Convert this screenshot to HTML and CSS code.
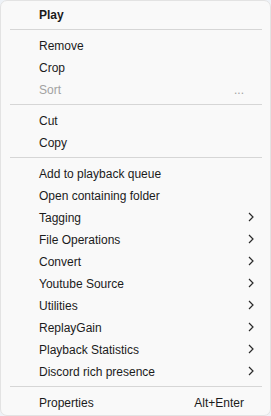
FILE: index.html
```html
<!DOCTYPE html>
<html lang="en">
<head>
  <meta charset="UTF-8" />
  <title>Context menu</title>
  <link rel="stylesheet" href="styles.css">
</head>
<body>

  <!-- Playlist context menu -->
  <div class="menu" role="menu">
    <div class="menu-item default" role="menuitem"><span class="label">Play</span></div>
    <div class="menu-sep"></div>

    <div class="menu-item" role="menuitem"><span class="label">Remove</span></div>
    <div class="menu-item" role="menuitem"><span class="label">Crop</span></div>
    <div class="menu-item disabled" role="menuitem"><span class="label">Sort</span><span class="hint">...</span></div>
    <div class="menu-sep"></div>

    <div class="menu-item" role="menuitem"><span class="label">Cut</span></div>
    <div class="menu-item" role="menuitem"><span class="label">Copy</span></div>
    <div class="menu-sep"></div>

    <div class="menu-item" role="menuitem"><span class="label">Add to playback queue</span></div>
    <div class="menu-item" role="menuitem"><span class="label">Open containing folder</span></div>
    <div class="menu-item sub" role="menuitem"><span class="label">Tagging</span><svg class="chev" viewBox="0 0 6 10"><polyline points="1,1 5,5 1,9" /></svg></div>
    <div class="menu-item sub" role="menuitem"><span class="label">File Operations</span><svg class="chev" viewBox="0 0 6 10"><polyline points="1,1 5,5 1,9" /></svg></div>
    <div class="menu-item sub" role="menuitem"><span class="label">Convert</span><svg class="chev" viewBox="0 0 6 10"><polyline points="1,1 5,5 1,9" /></svg></div>
    <div class="menu-item sub" role="menuitem"><span class="label">Youtube Source</span><svg class="chev" viewBox="0 0 6 10"><polyline points="1,1 5,5 1,9" /></svg></div>
    <div class="menu-item sub" role="menuitem"><span class="label">Utilities</span><svg class="chev" viewBox="0 0 6 10"><polyline points="1,1 5,5 1,9" /></svg></div>
    <div class="menu-item sub" role="menuitem"><span class="label">ReplayGain</span><svg class="chev" viewBox="0 0 6 10"><polyline points="1,1 5,5 1,9" /></svg></div>
    <div class="menu-item sub" role="menuitem"><span class="label">Playback Statistics</span><svg class="chev" viewBox="0 0 6 10"><polyline points="1,1 5,5 1,9" /></svg></div>
    <div class="menu-item sub" role="menuitem"><span class="label">Discord rich presence</span><svg class="chev" viewBox="0 0 6 10"><polyline points="1,1 5,5 1,9" /></svg></div>
    <div class="menu-sep"></div>

    <div class="menu-item" role="menuitem"><span class="label">Properties</span><span class="hint">Alt+Enter</span></div>
  </div>

</body>
</html>
```

FILE: styles.css
```css
html, body {
  margin: 0;
  padding: 0;
}

body {
  background-color: #eef2f7;
  font-family: 'Liberation Sans', Arial, sans-serif;
  font-size: 12px;
  color: #1b1b1b;
}

.menu {
  box-sizing: border-box;
  width: 271px;
  height: 416px;
  background-color: #f9f9f9;
  border: 1px solid #e3e3e3;
  border-radius: 7px;
  padding: 2px 0;
  display: flex;
  flex-direction: column;
}

.menu-item {
  box-sizing: border-box;
  height: 22px;
  display: flex;
  align-items: center;
  padding: 1px 16px 0 38px;
  white-space: nowrap;
}

.menu-item .label {
  flex: 1;
}

.menu-item.default .label {
  font-weight: bold;
}

.menu-item.disabled {
  color: #a2a2a2;
}

.menu-item .hint {
  color: #1b1b1b;
  margin-right: 10px;
}

.menu-item.disabled .hint {
  color: #a2a2a2;
}

.chev {
  width: 6px;
  height: 10px;
  margin-top: -1px;
  fill: none;
  stroke: #2b2b2b;
  stroke-width: 1.2;
}

.menu-sep {
  height: 9px;
  display: flex;
  align-items: center;
  padding: 0 8px 0 9px;
}

.menu-sep::before {
  content: "";
  flex: 1;
  height: 1px;
  background-color: #d6d6d6;
}
```
